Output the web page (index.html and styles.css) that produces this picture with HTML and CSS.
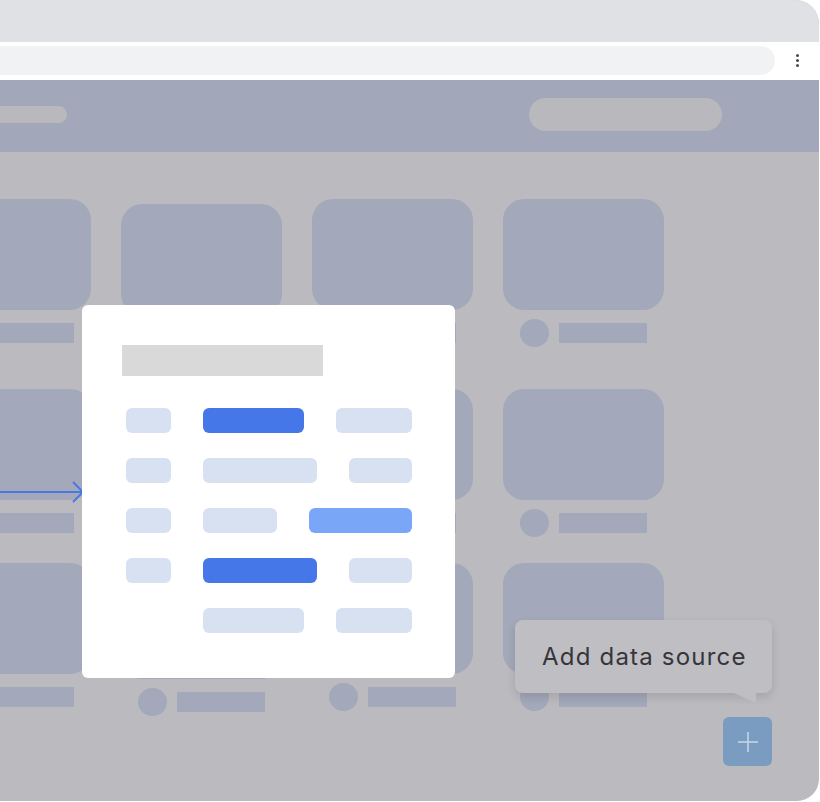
FILE: index.html
```html
<!DOCTYPE html>
<html lang="en">
  <head>
    <meta charset="UTF-8" />
    <meta name="viewport" content="width=device-width, initial-scale=1.0" />
    <title>Add data source</title>
    <link rel="stylesheet" href="styles.css">
  </head>
  <body>
    <div class="window">
      <div class="titlebar"></div>
      <div class="toolbar">
        <div class="address"></div>
        <div class="kebab"><i></i><i></i><i></i></div>
      </div>
      <div class="app-header">
        <div class="logo-pill"></div>
        <div class="search-pill"></div>
      </div>

      <div class="content">
        <div class="col">
          <div class="tile"><div class="card"></div><div class="meta"><span class="dot"></span><span class="line"></span></div></div>
          <div class="tile"><div class="card"></div><div class="meta"><span class="dot"></span><span class="line"></span></div></div>
          <div class="tile"><div class="card"></div><div class="meta"><span class="dot"></span><span class="line"></span></div></div>
        </div>
        <div class="col shift">
          <div class="tile"><div class="card"></div><div class="meta"><span class="dot"></span><span class="line"></span></div></div>
          <div class="tile"><div class="card"></div><div class="meta"><span class="dot"></span><span class="line"></span></div></div>
          <div class="tile"><div class="card"></div><div class="meta"><span class="dot"></span><span class="line"></span></div></div>
        </div>
        <div class="col">
          <div class="tile"><div class="card"></div><div class="meta"><span class="dot"></span><span class="line"></span></div></div>
          <div class="tile"><div class="card"></div><div class="meta"><span class="dot"></span><span class="line"></span></div></div>
          <div class="tile"><div class="card"></div><div class="meta"><span class="dot"></span><span class="line"></span></div></div>
        </div>
        <div class="col">
          <div class="tile"><div class="card"></div><div class="meta"><span class="dot"></span><span class="line"></span></div></div>
          <div class="tile"><div class="card"></div><div class="meta"><span class="dot"></span><span class="line"></span></div></div>
          <div class="tile"><div class="card"></div><div class="meta"><span class="dot"></span><span class="line"></span></div></div>
        </div>
      </div>

      <svg class="arrow" width="86" height="24" viewBox="0 0 86 24">
        <path d="M0 12 H83 M73 2 L83 12 L73 22" fill="none" stroke="#4a78e2" stroke-width="2" />
      </svg>

      <div class="modal">
        <div class="modal-title"></div>
        <div class="rows">
          <div class="row"><span class="pill a"></span><span class="pill dark w101"></span><span class="pill end w76"></span></div>
          <div class="row"><span class="pill a"></span><span class="pill w114"></span><span class="pill end w63"></span></div>
          <div class="row"><span class="pill a"></span><span class="pill w74"></span><span class="pill mid end w103"></span></div>
          <div class="row"><span class="pill a"></span><span class="pill dark w114"></span><span class="pill end w63"></span></div>
          <div class="row"><span class="pill a blank"></span><span class="pill w101"></span><span class="pill end w76"></span></div>
        </div>
      </div>

      <div class="tooltip">Add data source</div>
      <button class="fab" aria-label="Add">
        <svg width="22" height="22" viewBox="0 0 22 22">
          <path d="M11 1 V21 M1 11 H21" stroke="#c9d6e6" stroke-width="1.5" />
        </svg>
      </button>
    </div>
  </body>
</html>
```

FILE: styles.css
```css
* {
  margin: 0;
  padding: 0;
  box-sizing: border-box;
}
body {
  background: #ffffff;
  font-family: "Inter", "Noto Sans", sans-serif;
}
.window {
  position: relative;
  width: 819px;
  height: 801px;
  background-color: #bbbbbf;
  border-radius: 0 24px 22px 0;
  overflow: hidden;
}
.titlebar {
  height: 42px;
  background-color: #e0e1e5;
}
.toolbar {
  height: 38px;
  background-color: #ffffff;
  display: flex;
  align-items: center;
  padding-bottom: 1px;
}
.address {
  width: 775px;
  height: 29px;
  background-color: #f1f2f4;
  border-radius: 0 15px 15px 0;
}
.kebab {
  display: flex;
  flex-direction: column;
  gap: 2px;
  margin-left: 21px;
}
.kebab i {
  width: 3px;
  height: 3px;
  border-radius: 50%;
  background-color: #4a4a4f;
}
.app-header {
  height: 72px;
  background-color: #a2a7b9;
  display: flex;
  align-items: center;
  justify-content: space-between;
  padding-bottom: 3px;
}
.logo-pill {
  width: 100px;
  height: 17px;
  margin-left: -33px;
  background-color: #b9b9bd;
  border-radius: 9px;
}
.search-pill {
  width: 193px;
  height: 33px;
  margin-right: 97px;
  background-color: #b9b9bd;
  border-radius: 17px;
}

/* card grid behind the overlay */
.content {
  display: flex;
  gap: 30px;
  margin-left: -70px;
  padding-top: 47px;
}
.col {
  display: flex;
  flex-direction: column;
  gap: 42px;
  width: 161px;
}
.col.shift {
  padding-top: 5px;
}
.tile:last-child {
  margin-top: -16px;
}
.card {
  height: 111px;
  background-color: #a3a8ba;
  border-radius: 21px;
}
.meta {
  display: flex;
  align-items: center;
  gap: 10px;
  margin-top: 9px;
  padding-left: 17px;
}
.dot {
  width: 29px;
  height: 28px;
  border-radius: 50%;
  background-color: #a3a8ba;
}
.line {
  width: 88px;
  height: 20px;
  background-color: #a3a8ba;
}

.arrow {
  position: absolute;
  left: 0;
  top: 480px;
}

/* modal */
.modal {
  position: absolute;
  left: 82px;
  top: 305px;
  width: 373px;
  height: 373px;
  background-color: #ffffff;
  border-radius: 6px;
  padding: 40px 43px 0 44px;
}
.modal-title {
  width: 201px;
  height: 31px;
  margin-left: -4px;
  background-color: #d9d9d9;
}
.rows {
  display: flex;
  flex-direction: column;
  gap: 25px;
  margin-top: 32px;
}
.row {
  display: flex;
  align-items: center;
}
.pill {
  height: 25px;
  border-radius: 6px;
  background-color: #d8e1f1;
}
.pill.a {
  width: 45px;
  margin-right: 32px;
}
.pill.blank {
  visibility: hidden;
}
.pill.end {
  margin-left: auto;
}
.pill.dark {
  background-color: #4677e8;
}
.pill.mid {
  background-color: #7aa6f8;
}
.w63 { width: 63px; }
.w74 { width: 74px; }
.w76 { width: 76px; }
.w101 { width: 101px; }
.w103 { width: 103px; }
.w114 { width: 114px; }

/* tooltip + fab */
.tooltip {
  position: absolute;
  left: 515px;
  top: 620px;
  width: 257px;
  height: 73px;
  padding-left: 27px;
  display: flex;
  align-items: center;
  background-color: #bfbfc3;
  border-radius: 8px;
  box-shadow: 0 4px 10px rgba(0, 0, 0, 0.12);
  color: #35353c;
  font-size: 24px;
  font-weight: 400;
  letter-spacing: 1.2px;
}
.tooltip::after {
  content: "";
  position: absolute;
  right: 16px;
  bottom: -10px;
  border-top: 10px solid #bfbfc3;
  border-left: 22px solid transparent;
  border-right: 0 solid transparent;
}
.fab {
  position: absolute;
  left: 723px;
  top: 717px;
  width: 49px;
  height: 49px;
  border: none;
  border-radius: 6px;
  background-color: #7a9cc1;
  display: flex;
  align-items: center;
  justify-content: center;
}
```
